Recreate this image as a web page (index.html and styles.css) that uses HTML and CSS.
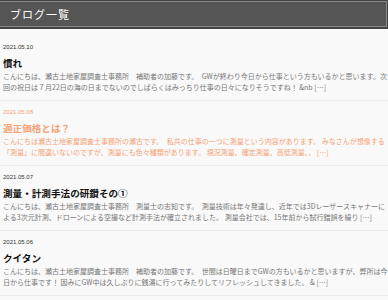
FILE: index.html
```html
<!doctype html>
<html lang="ja">
<head>
    <meta charset="UTF-8">
    <meta name="viewport" content="width=device-width, initial-scale=1.0">
    <title>ブログ一覧</title>
    <link rel="stylesheet" href="styles.css">
</head>
<body>
    <div class="page-head">
        <h2>ブログ一覧</h2>
    </div>

    <ul class="posts">
        <li class="post">
            <div class="date">2021.05.10</div>
            <h3>慣れ</h3>
            <p>こんにちは、瀬古土地家屋調査士事務所　補助者の加藤です。　GWが終わり今日から仕事という方もいるかと思います。次回の祝日は７月22日の海の日までないのでしばらくはみっちり仕事の日々になりそうですね！ &amp;nb […]</p>
        </li>
        <li class="post hover">
            <div class="date">2021.05.08</div>
            <h3>適正価格とは？</h3>
            <p>こんにちは瀬古土地家屋調査士事務所の瀬古です。　私共の仕事の一つに測量という内容があります。 みなさんが想像する「測量」に間違いないのですが、測量にも色々種類があります。 現況測量、確定測量、高低測量、、 […]</p>
        </li>
        <li class="post">
            <div class="date">2021.05.07</div>
            <h3>測量・計測手法の研鑽その①</h3>
            <p>こんにちは、瀬古土地家屋調査士事務所　測量士の志知です。　測量技術は年々発達し、近年では3Dレーザースキャナーによる3次元計測、ドローンによる空撮など計測手法が確立されました。 測量会社では、15年前から試行錯誤を繰り […]</p>
        </li>
        <li class="post">
            <div class="date">2021.05.06</div>
            <h3>クイタン</h3>
            <p>こんにちは、瀬古土地家屋調査士事務所　補助者の加藤です。　世間は日曜日までGWの方もいるかと思いますが、弊所は今日から仕事です！ 因みにGW中は久しぶりに銭湯に行ってみたりしてリフレッシュしてきました。 &amp; […]</p>
        </li>
    </ul>
</body>
</html>
```

FILE: styles.css
```css
body {
    margin: 0;
    background-color: #f9f9f9;
    color: #333;
    font-family: "Noto Sans CJK JP", "Noto Sans", sans-serif;
}
.page-head {
    height: 26px;
    background-color: #555;
    border-top: 1px solid #444;
    border-bottom: 2px solid #444;
    border-right: 1px solid #444;
    box-shadow: inset 0 1px #8a8a8a, inset 0 -1px #8a8a8a, inset -1px 0 #8a8a8a;
}
.page-head h2 {
    margin: 0;
    padding-left: 10px;
    line-height: 27px;
    font-size: 11px;
    font-weight: normal;
    letter-spacing: 1px;
    color: #fff;
}
.posts {
    list-style: none;
    margin: 7px 0 0;
    padding: 0;
}
.post {
    padding: 7px 0 7px 3px;
    border-bottom: 1px solid #ececec;
}
.date {
    font-family: "Liberation Sans", Arial, sans-serif;
    font-size: 6px;
    line-height: 8px;
    color: #333;
}
.post h3 {
    margin: 5px 0 0;
    font-size: 9.6px;
    line-height: 14px;
    font-weight: bold;
    color: #111;
}
.post p {
    margin: 1px 0 0;
    font-size: 7px;
    line-height: 11px;
    color: #777;
}
.post.hover .date,
.post.hover h3,
.post.hover p {
    color: #f5a275;
}
```
